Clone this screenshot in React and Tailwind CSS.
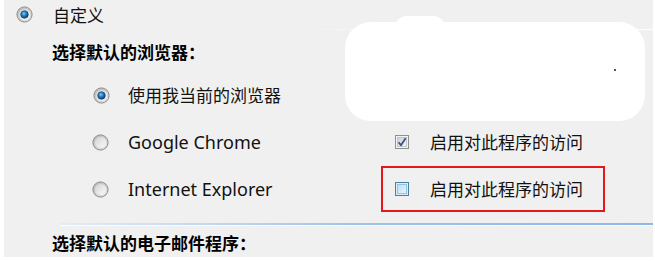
import React from 'react';

const cjk = { fontFamily: '"Noto Sans CJK SC", "Microsoft YaHei", sans-serif' };
const latin = { fontFamily: '"Noto Sans", "Noto Sans CJK SC", sans-serif' };

function Radio({ checked = false }) {
  return (
    <svg width="17" height="17" viewBox="0 0 17 17" className="shrink-0">
      <defs>
        <linearGradient id="ring" x1="0" y1="0" x2="1" y2="1">
          <stop offset="0" stopColor="#b5b5b5" />
          <stop offset="1" stopColor="#e6e6e6" />
        </linearGradient>
        <linearGradient id="face" x1="0" y1="0" x2="1" y2="1">
          <stop offset="0" stopColor="#d2d2d2" />
          <stop offset="1" stopColor="#fbfbfb" />
        </linearGradient>
        <radialGradient id="dot" cx="0.42" cy="0.38" r="0.6">
          <stop offset="0" stopColor="#7fd0f7" />
          <stop offset="0.5" stopColor="#1f7fc4" />
          <stop offset="1" stopColor="#0c3e72" />
        </radialGradient>
      </defs>
      <circle cx="8.5" cy="8.5" r="7.6" fill="url(#ring)" stroke="#8c8c8c" strokeWidth="1" />
      <circle cx="8.5" cy="8.5" r="5.6" fill="url(#face)" />
      {checked && <circle cx="8.5" cy="8.5" r="3.8" fill="url(#dot)" stroke="#13406f" strokeWidth="0.6" />}
    </svg>
  );
}

function Checkbox({ checked = false, hot = false }) {
  if (hot) {
    return (
      <svg width="14" height="14" viewBox="0 0 14 14" className="shrink-0">
        <defs>
          <linearGradient id="hotfill" x1="0" y1="0" x2="1" y2="1">
            <stop offset="0" stopColor="#b9def5" />
            <stop offset="1" stopColor="#eaf6fd" />
          </linearGradient>
        </defs>
        <rect x="0.5" y="0.5" width="13" height="13" fill="#deedf6" stroke="#4f7f9c" />
        <rect x="2.5" y="2.5" width="9" height="9" fill="url(#hotfill)" stroke="#8fc6e8" />
      </svg>
    );
  }
  return (
    <svg width="14" height="14" viewBox="0 0 14 14" className="shrink-0">
      <defs>
        <linearGradient id="boxfill" x1="0" y1="0" x2="1" y2="1">
          <stop offset="0" stopColor="#cfcfcf" />
          <stop offset="1" stopColor="#f6f6f6" />
        </linearGradient>
      </defs>
      <rect x="0.5" y="0.5" width="13" height="13" fill="#f4f4f4" stroke="#8e8f8f" />
      <rect x="2.5" y="2.5" width="9" height="9" fill="url(#boxfill)" stroke="#c4c4c4" />
      {checked && <path d="M3.6 7.2 L6 10.2 L10.6 3.2" fill="none" stroke="#3c4f92" strokeWidth="1.8" strokeLinejoin="round" />}
    </svg>
  );
}

function AccessToggle({ checked, hot, framed }) {
  return (
    <div className={`w-[224px] h-[46px] flex items-center pl-[12px] gap-[21px] border-2 ${framed ? 'border-[#e5161c]' : 'border-transparent'}`}>
      <Checkbox checked={checked} hot={hot} />
      <span className="text-[17px] text-[#111]" style={cjk}>启用对此程序的访问</span>
    </div>
  );
}

export default function App() {
  return (
    <div className="w-[655px] h-[261px] bg-white relative overflow-hidden">
      <div className="ml-[4px] w-[649px] h-[257px] bg-[#f0f0f0] flex flex-col">
        <div className="h-[29px] flex items-center pl-[12px] gap-[20px]">
          <Radio checked />
          <span className="text-[17px] text-[#111]" style={cjk}>自定义</span>
        </div>
        <div className="h-px ml-[280px] bg-gradient-to-r from-[#f0f0f0] via-[#fdfdfd] to-[#fdfdfd]" />

        <div className="h-[44px] flex items-center pl-[48px]">
          <span className="text-[17px] font-bold text-black" style={cjk}>选择默认的浏览器：</span>
        </div>

        <div className="h-[42px] flex items-center pl-[89px] gap-[18px]">
          <Radio checked />
          <span className="text-[17px] text-[#111]" style={cjk}>使用我当前的浏览器</span>
        </div>

        <div className="h-[50px] flex items-center pt-[2px]">
          <div className="w-[377px] flex items-center pl-[88px] gap-[19px]">
            <Radio />
            <span className="text-[18px] text-[#111]" style={latin}>Google Chrome</span>
          </div>
          <AccessToggle checked />
        </div>

        <div className="h-[46px] flex items-center">
          <div className="w-[377px] flex items-center pl-[88px] gap-[19px]">
            <Radio />
            <span className="text-[18px] text-[#111]" style={latin}>Internet Explorer</span>
          </div>
          <AccessToggle hot framed />
        </div>

        <div className="h-[11px]" />
        <div className="ml-[56px] h-[2px] bg-gradient-to-r from-[#e4ecf5] via-[#9cc3ec] to-[#8cb8e8]" />
        <div className="h-px ml-[56px] bg-[#fafcff]" />

        <div className="flex items-center pl-[48px] pt-[4px]">
          <span className="text-[17px] font-bold text-black leading-[26px]" style={cjk}>选择默认的电子邮件程序：</span>
        </div>
      </div>

      <div className="absolute left-[345px] top-[22px] w-[300px] h-[99px] bg-white rounded-[26px]" />
      <div className="absolute left-[395px] top-[16px] w-[50px] h-[24px] bg-white rounded-full" />
      <div className="absolute left-[614px] top-[69px] w-[2px] h-[2px] bg-[#555]" />
    </div>
  );
}
